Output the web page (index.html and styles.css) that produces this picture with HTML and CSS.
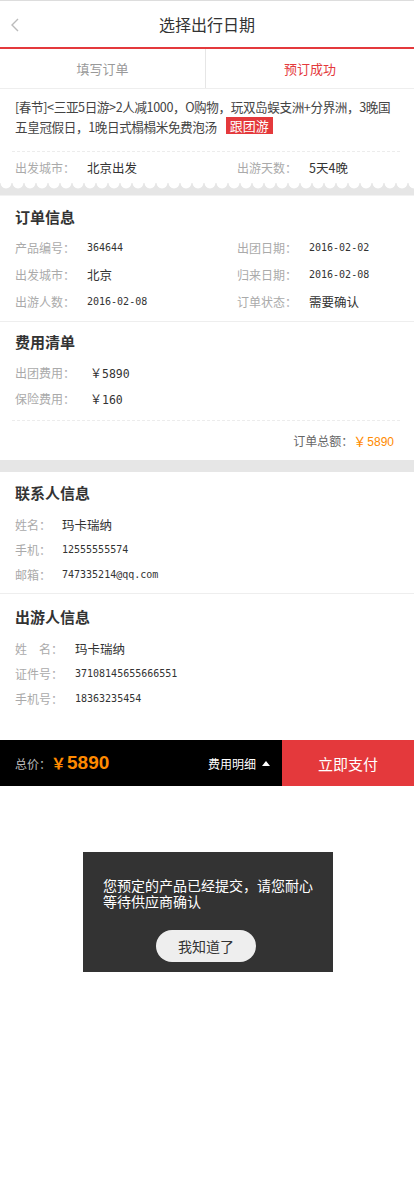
FILE: index.html
```html
<!DOCTYPE html>
<html lang="zh-CN">
<head>
<meta charset="utf-8">
<title>选择出行日期</title>
<link rel="stylesheet" href="styles.css">
</head>
<body>
<div class="page">
  <header class="nav">
    <svg class="back" width="10" height="16" viewBox="0 0 10 16"><polyline points="8,2 2,8 8,14" fill="none" stroke="#bbb" stroke-width="1.4"/></svg>
    <h1 class="nav-title">选择出行日期</h1>
  </header>
  <div class="tabs">
    <div class="tab">填写订单</div>
    <div class="tab tab-on">预订成功</div>
  </div>

  <section class="product">
    <p class="desc"><span class="desc-text">[春节]&lt;三亚5日游&gt;2人减1000，O购物，玩双岛蜈支洲+分界洲，3晚国五皇冠假日，1晚日式榻榻米免费泡汤</span><span class="tag">跟团游</span></p>
    <div class="prow">
      <div class="cell"><span class="lab">出发城市：</span><span class="val">北京出发</span></div>
      <div class="cell"><span class="lab">出游天数：</span><span class="val">5天4晚</span></div>
    </div>
  </section>
  <div class="wave"></div>

  <section class="block order">
    <h2 class="btitle">订单信息</h2>
    <div class="grid2">
      <div class="cell"><span class="lab">产品编号：</span><span class="num">364644</span></div>
      <div class="cell"><span class="lab">出团日期：</span><span class="num">2016-02-02</span></div>
      <div class="cell"><span class="lab">出发城市：</span><span class="val">北京</span></div>
      <div class="cell"><span class="lab">归来日期：</span><span class="num">2016-02-08</span></div>
      <div class="cell"><span class="lab">出游人数：</span><span class="num">2016-02-08</span></div>
      <div class="cell"><span class="lab">订单状态：</span><span class="val">需要确认</span></div>
    </div>
  </section>

  <section class="block fee">
    <h2 class="btitle">费用清单</h2>
    <div class="list">
      <div class="cell fee-row"><span class="lab lab-fee">出团费用：</span><span class="money">￥<span class="mnum">5890</span></span></div>
      <div class="cell fee-row"><span class="lab lab-fee">保险费用：</span><span class="money">￥<span class="mnum">160</span></span></div>
    </div>
    <div class="total"><span class="total-lab">订单总额：</span><span class="total-val">￥<span class="tnum">5890</span></span></div>
  </section>
  <div class="gap"></div>

  <section class="block contact">
    <h2 class="btitle">联系人信息</h2>
    <div class="list">
      <div class="cell prow2"><span class="lab lab-c">姓名：</span><span class="val">玛卡瑞纳</span></div>
      <div class="cell prow2"><span class="lab lab-c">手机：</span><span class="num">12555555574</span></div>
      <div class="cell prow2"><span class="lab lab-c">邮箱：</span><span class="num">747335214@qq.com</span></div>
    </div>
  </section>

  <section class="block traveler">
    <h2 class="btitle">出游人信息</h2>
    <div class="list">
      <div class="cell prow2"><span class="lab lab-t">姓　名：</span><span class="val">玛卡瑞纳</span></div>
      <div class="cell prow2"><span class="lab lab-t">证件号：</span><span class="num">37108145655666551</span></div>
      <div class="cell prow2"><span class="lab lab-t">手机号：</span><span class="num">18363235454</span></div>
    </div>
  </section>

  <div class="bar">
    <div class="bar-left">
      <span class="bar-lab">总价：</span><span class="bar-price"><span class="bar-yen">￥</span>5890</span>
    </div>
    <div class="bar-detail">费用明细<span class="tri"></span></div>
    <div class="bar-pay">立即支付</div>
  </div>

  <div class="dialog">
    <p class="dialog-text">您预定的产品已经提交，请您耐心等待供应商确认</p>
    <div class="dialog-btn">我知道了</div>
  </div>
</div>
</body>
</html>
```

FILE: styles.css
```css
* { box-sizing: border-box; }
html, body { margin: 0; padding: 0; background: #fff; }
body {
  font-family: "Noto Sans CJK SC", "Liberation Sans", sans-serif;
  color: #333;
  font-size: 12px;
}
.page { width: 414px; }
p, h1, h2 { margin: 0; }

.nav {
  height: 49px;
  border-top: 1px solid #ddd;
  border-bottom: 2px solid #e4393c;
  display: flex;
  align-items: center;
  justify-content: center;
  position: relative;
}
.back { position: absolute; left: 10px; top: 16px; }
.nav-title { font-size: 16px; font-weight: normal; color: #333; line-height: 20px; }

.tabs {
  display: flex;
  height: 40px;
  border-bottom: 1px solid #eee;
}
.tab {
  flex: 0 0 205px;
  display: flex;
  align-items: center;
  justify-content: center;
  color: #999;
  font-size: 13px;
}
.tab + .tab { flex: 1; border-left: 1px solid #e6e6e6; }
.tab-on { color: #e4393c; }

.product { padding-top: 8px; }
.desc {
  padding: 0 12px 14px 15px;
  font-size: 12.6px;
  line-height: 20px;
  color: #444;
}
.desc-text { letter-spacing: -0.4px; }
.tag {
  display: inline-block;
  margin-left: 9px;
  padding: 0 4px;
  height: 17px;
  line-height: 17px;
  background: #e4393c;
  color: #fff;
  font-size: 13px;
  vertical-align: top;
}
.prow {
  margin: 0 14px 0 12px;
  border-top: 1px dashed #ececec;
  height: 32px;
  display: grid;
  grid-template-columns: 222px 1fr;
  padding-left: 3px;
}
.cell { display: flex; align-items: center; }
.lab { color: #aaa; font-size: 12px; flex: 0 0 72px; }
.val { color: #333; font-size: 12.5px; }
.num { color: #333; font-family: "DejaVu Sans Mono", "Liberation Mono", monospace; font-size: 10px; }

.wave {
  height: 12px;
  background-color: #e6e6e6;
  background-image: radial-gradient(circle at 6px 0, #fff 5px, rgba(255,255,255,0) 5.8px);
  background-size: 12px 6px;
  background-repeat: repeat-x;
}

.block { padding: 0 0 0 15px; }
.btitle { font-size: 15px; font-weight: 700; line-height: 24px; color: #333; }

.order { border-top: 1px solid #f2f2f2; padding-top: 9px; padding-bottom: 6px; border-bottom: 1px solid #eee; }
.order .grid2 { margin-top: 5px; display: grid; grid-template-columns: 222px 1fr; grid-auto-rows: 27px; }

.fee { padding-top: 8px; padding-left: 0; }
.fee .btitle { padding-left: 15px; }
.fee .list { margin-top: 5px; padding-left: 15px; }
.fee-row { height: 26px; }
.lab-fee { flex-basis: 75px; }
.money { font-size: 12px; color: #333; }
.mnum { font-family: "DejaVu Sans Mono", "Liberation Mono", monospace; font-size: 11.5px; }
.total {
  margin: 9px 14px 0 12px;
  border-top: 1px dashed #ececec;
  height: 40px;
  display: flex;
  align-items: center;
  justify-content: flex-end;
  padding-right: 6px;
}
.total-lab { color: #666; font-size: 12px; }
.total-val { color: #ff8a00; font-size: 13px; }
.tnum { font-family: "Liberation Sans", sans-serif; font-size: 12px; margin-left: 1px; }

.gap { height: 12px; background: #e6e6e6; }

.contact { padding-top: 9px; padding-bottom: 6px; border-bottom: 1px solid #eee; }
.traveler { padding-top: 11px; padding-bottom: 29px; }
.contact .list, .traveler .list { margin-top: 7px; }
.prow2 { height: 25px; }
.lab-c { flex-basis: 47px; }
.lab-t { flex-basis: 60px; }

.bar {
  height: 46px;
  background: #000;
  display: flex;
  align-items: center;
}
.bar-left { flex: 1; padding-left: 15px; display: flex; align-items: center; }
.bar-lab { color: #bbb; font-size: 12px; }
.bar-price { color: #ff8a00; font-family: "Liberation Sans", sans-serif; font-weight: 700; font-size: 19px; }
.bar-yen { font-family: "Noto Sans CJK SC", sans-serif; font-size: 15px; font-weight: 700; margin-right: 1px; }
.bar-detail { color: #fff; font-size: 12px; display: flex; align-items: center; margin-right: 12px; }
.tri {
  width: 0; height: 0;
  border-left: 4px solid transparent;
  border-right: 4px solid transparent;
  border-bottom: 5px solid #fff;
  margin-left: 6px;
}
.bar-pay {
  width: 132px;
  height: 46px;
  background: #e4393c;
  color: #fff;
  font-size: 15px;
  display: flex;
  align-items: center;
  justify-content: center;
}

.dialog {
  width: 250px;
  margin: 66px 0 0 83px;
  background: #333;
  padding: 25px 20px 10px;
}
.dialog-text { color: #fff; font-size: 14px; line-height: 16px; }
.dialog-btn {
  width: 100px;
  height: 32px;
  margin: 21px 0 0 53px;
  border-radius: 16px;
  background: #eee;
  color: #333;
  font-size: 14px;
  display: flex;
  align-items: center;
  justify-content: center;
}
```
